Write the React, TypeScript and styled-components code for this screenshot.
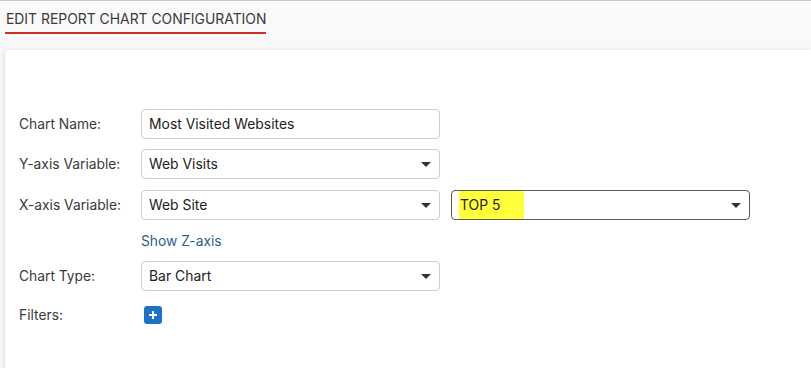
import React from 'react';
import styled, { createGlobalStyle } from 'styled-components';

const GlobalStyle = createGlobalStyle`
  html, body {
    margin: 0;
    padding: 0;
    background: #f9f9f9;
    font-family: Inter, "Noto Sans", sans-serif;
    color: #333;
  }
`;

const Page = styled.div`
  width: 811px;
  height: 368px;
  overflow: hidden;
  border-top: 1px solid #c9c9c9;
  box-sizing: border-box;
  background: #f9f9f9;
`;

const Header = styled.div`
  padding: 7px 0 0 5px;
  height: 40px;
  box-sizing: border-box;
`;

const Title = styled.h1`
  display: inline-block;
  margin: 0;
  font-size: 13.9px;
  font-weight: 400;
  color: #3a3a3a;
  padding: 0 0 5px 1px;
  border-bottom: 2px solid #cc2f26;
`;

const Card = styled.div`
  margin: 9px 0 0 5px;
  background: #fff;
  border-radius: 4px 0 0 0;
  box-shadow: -1px 0 4px rgba(0, 0, 0, 0.12);
  padding: 59px 0 40px 14px;
  min-height: 320px;
`;

const Row = styled.div<{ $height?: number; $gap?: number }>`
  display: flex;
  align-items: center;
  height: ${({ $height }) => $height || 30}px;
  margin-bottom: ${({ $gap }) => ($gap === undefined ? 10 : $gap)}px;
`;

const Label = styled.label`
  width: 122px;
  flex: none;
  font-size: 13.8px;
  color: #3a3a3a;
`;

const Field = styled.div<{ $strong?: boolean; $ml?: number }>`
  position: relative;
  width: 299px;
  height: 30px;
  box-sizing: border-box;
  margin-left: ${({ $ml }) => $ml || 0}px;
  border: 1px solid ${({ $strong }) => ($strong ? '#5a5a5a' : '#cfcfcf')};
  border-radius: 4px;
  background: #fff;
  display: flex;
  align-items: center;
  padding: 0 8px 0 7px;
  font-size: 13.9px;
  color: #222;
`;

const Value = styled.span<{ $mark?: boolean }>`
  flex: 1;
  white-space: nowrap;
  ${({ $mark }) => ($mark ? 'flex: none; background: #ffff3a; padding: 6px 24px 6px 1px;' : '')}
`;

const Spacer = styled.span`
  flex: 1;
`;

const Caret = styled.span`
  width: 0;
  height: 0;
  border-left: 5px solid transparent;
  border-right: 5px solid transparent;
  border-top: 5px solid #333;
  margin-top: 1px;
`;

const Link = styled.a`
  margin-left: 122px;
  font-size: 13.8px;
  color: #2e5e8c;
  text-decoration: none;
`;

const AddButton = styled.button`
  width: 18px;
  height: 18px;
  margin-left: 3px;
  padding: 0;
  border: none;
  border-radius: 3px;
  background: #1d72c6;
  display: flex;
  align-items: center;
  justify-content: center;
`;

type SelectProps = { value: string; strong?: boolean; mark?: boolean; ml?: number };

const Select = ({ value, strong, mark, ml }: SelectProps) => (
  <Field $strong={strong} $ml={ml}>
    <Value $mark={mark}>{value}</Value>
    {mark && <Spacer />}
    <Caret />
  </Field>
);

const App = () => (
  <Page>
    <GlobalStyle />
    <Header>
      <Title>EDIT REPORT CHART CONFIGURATION</Title>
    </Header>
    <Card>
      <Row>
        <Label>Chart Name:</Label>
        <Field>
          <Value>Most Visited Websites</Value>
        </Field>
      </Row>
      <Row $gap={11}>
        <Label>Y-axis Variable:</Label>
        <Select value="Web Visits" />
      </Row>
      <Row $gap={0}>
        <Label>X-axis Variable:</Label>
        <Select value="Web Site" />
        <Select value="TOP 5" strong mark ml={11} />
      </Row>
      <Row $height={41} $gap={0}>
        <Link href="#">Show Z-axis</Link>
      </Row>
      <Row $gap={11}>
        <Label>Chart Type:</Label>
        <Select value="Bar Chart" />
      </Row>
      <Row $height={26}>
        <Label>Filters:</Label>
        <AddButton aria-label="Add filter">
          <svg width="10" height="10" viewBox="0 0 10 10">
            <path d="M5 1v8M1 5h8" stroke="#fff" strokeWidth="2" />
          </svg>
        </AddButton>
      </Row>
    </Card>
  </Page>
);

export default App;
